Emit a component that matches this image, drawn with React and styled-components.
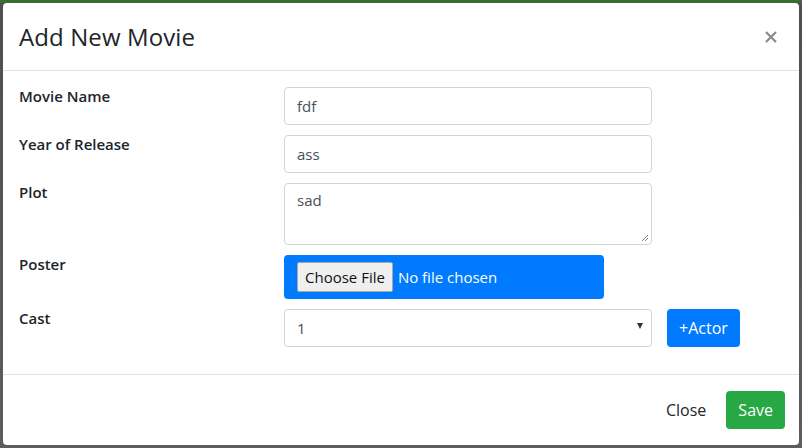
import React from "react";
import styled, { createGlobalStyle } from "styled-components";

const GlobalStyle = createGlobalStyle`
  html, body {
    margin: 0;
    padding: 0;
    background: #5c5f5c;
  }
  body {
    font-family: "Open Sans", "Noto Sans", sans-serif;
    color: #212529;
  }
  * {
    box-sizing: border-box;
  }
`;

const Backdrop = styled.div`
  width: 802px;
  height: 448px;
  padding: 3px 3px 3px 3px;
  background: linear-gradient(to bottom, #3d6b35 0px, #3d6b35 3px, #4d504d 3px, #5d5d5d 100%);
`;

const Modal = styled.div`
  width: 796px;
  height: 442px;
  background: #fff;
  border-radius: 4px;
  display: flex;
  flex-direction: column;
`;

const Header = styled.div`
  display: flex;
  align-items: center;
  justify-content: space-between;
  padding: 16px 16px 16px 16px;
  height: 68px;
  border-bottom: 1px solid #dee2e6;
`;

const Title = styled.h5`
  margin: 0 0 0 0;
  font-size: 24px;
  font-weight: 500;
  line-height: 36px;
  color: #212529;
  letter-spacing: 0.1px;
`;

const CloseX = styled.button`
  border: none;
  background: none;
  padding: 0;
  margin-right: 4px;
  width: 16px;
  height: 16px;
  display: flex;
  align-items: center;
  justify-content: center;
  cursor: pointer;
`;

const Body = styled.div`
  padding: 16px 16px 5px 16px;
  flex: 1;
`;

const Row = styled.div`
  display: grid;
  grid-template-columns: 265px auto;
  margin-bottom: 10px;
`;

const Label = styled.label`
  font-size: 15px;
  font-weight: 600;
  line-height: 18px;
  color: #212529;
  padding-top: 0;
`;

const Field = styled.div`
  display: flex;
  align-items: center;
  gap: 15px;
`;

const Input = styled.div`
  width: 368px;
  height: ${(p) => p.$h || 38}px;
  border: 1px solid #ced4da;
  border-radius: 4px;
  padding: ${(p) => (p.$area ? "6px 12px" : "0 12px")};
  display: flex;
  align-items: ${(p) => (p.$area ? "flex-start" : "center")};
  font-size: 15px;
  color: #495057;
  position: relative;
`;

const Grip = styled.svg`
  position: absolute;
  right: 2px;
  bottom: 2px;
`;

const Arrow = styled.span`
  position: absolute;
  right: 8px;
  top: 13px;
  width: 0;
  height: 0;
  border-left: 3.5px solid transparent;
  border-right: 3.5px solid transparent;
  border-top: 6px solid #333;
`;

const FileBox = styled.div`
  width: 320px;
  height: 44px;
  background: #007bff;
  border-radius: 4px;
  display: flex;
  align-items: center;
  padding-left: 13px;
  gap: 5px;
`;

const FileButton = styled.span`
  height: 30px;
  padding: 0 7px;
  display: flex;
  align-items: center;
  background: #efefef;
  border: 1px solid #a8a8a8;
  border-radius: 2px;
  font-size: 15px;
  color: #111;
`;

const FileText = styled.span`
  font-size: 15px;
  color: #fff;
`;

const Button = styled.button`
  height: 38px;
  padding: 0 12px;
  border: none;
  border-radius: 4px;
  font-family: inherit;
  font-size: 16px;
  color: ${(p) => (p.$variant === "link" ? "#212529" : "#fff")};
  background: ${(p) =>
    p.$variant === "success" ? "#28a745" : p.$variant === "primary" ? "#007bff" : "transparent"};
`;

const Footer = styled.div`
  display: flex;
  justify-content: flex-end;
  align-items: center;
  gap: 8px;
  padding: 16px 14px 16px 16px;
  border-top: 1px solid #dee2e6;
`;

export default function App() {
  return (
    <>
      <GlobalStyle />
      <Backdrop>
        <Modal>
          <Header>
            <Title>Add New Movie</Title>
            <CloseX aria-label="Close">
              <svg width="12" height="12" viewBox="0 0 12 12">
                <path d="M1 1L11 11M11 1L1 11" stroke="#8a8a8a" strokeWidth="2.2" />
              </svg>
            </CloseX>
          </Header>
          <Body>
            <Row>
              <Label>Movie Name</Label>
              <Field>
                <Input>fdf</Input>
              </Field>
            </Row>
            <Row>
              <Label>Year of Release</Label>
              <Field>
                <Input>ass</Input>
              </Field>
            </Row>
            <Row>
              <Label>Plot</Label>
              <Field>
                <Input $area $h={62}>
                  sad
                  <Grip width="8" height="8" viewBox="0 0 8 8">
                    <path d="M7 1L1 7M7 4L4 7" stroke="#888" strokeWidth="1" />
                  </Grip>
                </Input>
              </Field>
            </Row>
            <Row>
              <Label>Poster</Label>
              <Field>
                <FileBox>
                  <FileButton>Choose File</FileButton>
                  <FileText>No file chosen</FileText>
                </FileBox>
              </Field>
            </Row>
            <Row>
              <Label>Cast</Label>
              <Field>
                <Input>
                  1
                  <Arrow />
                </Input>
                <Button $variant="primary">+Actor</Button>
              </Field>
            </Row>
          </Body>
          <Footer>
            <Button $variant="link">Close</Button>
            <Button $variant="success">Save</Button>
          </Footer>
        </Modal>
      </Backdrop>
    </>
  );
}
